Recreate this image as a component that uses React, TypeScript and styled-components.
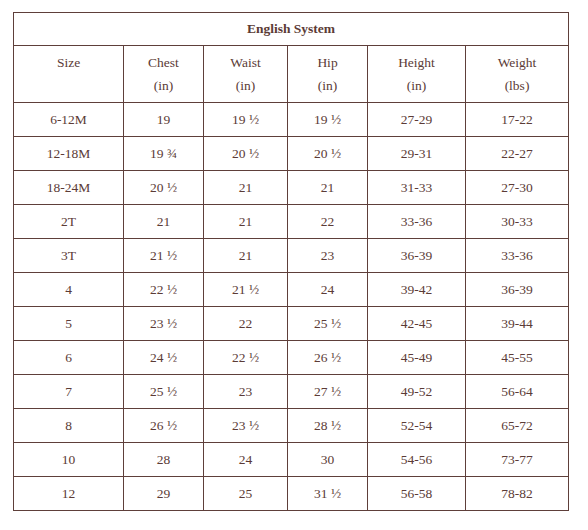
import styled, { createGlobalStyle } from "styled-components";

const GlobalStyle = createGlobalStyle`
	body {
		margin: 0;
		background: #fff;
		font-family: "Liberation Serif", "DejaVu Serif", serif;
		color: #5b3b36;
	}
`;

const Page = styled.div`
	padding: 12px 20px 20px 13px;
`;

const SizeTable = styled.table`
	width: 555px;
	border-collapse: collapse;
	table-layout: fixed;
	font-size: 13.5px;
	color: #5b3b36;

	td, th {
		border: 1px solid #5e3f3a;
		text-align: center;
		padding: 0;
	}
`;

const TitleCell = styled.th`
	height: 32px;
	font-weight: bold;
	font-size: 13.5px;
`;

const HeadCell = styled.td`
	height: 51px;
	vertical-align: top;
	padding-top: 5px !important;
	line-height: 23px;
`;

const Cell = styled.td`
	height: 33px;
	vertical-align: middle;
`;

const columns = [
	{ label: "Size", unit: "", width: 110 },
	{ label: "Chest", unit: "(in)", width: 80 },
	{ label: "Waist", unit: "(in)", width: 84 },
	{ label: "Hip", unit: "(in)", width: 80 },
	{ label: "Height", unit: "(in)", width: 98 },
	{ label: "Weight", unit: "(lbs)", width: 103 },
];

const rows = [
	["6-12M", "19", "19 ½", "19 ½", "27-29", "17-22"],
	["12-18M", "19 ¾", "20 ½", "20 ½", "29-31", "22-27"],
	["18-24M", "20 ½", "21", "21", "31-33", "27-30"],
	["2T", "21", "21", "22", "33-36", "30-33"],
	["3T", "21 ½", "21", "23", "36-39", "33-36"],
	["4", "22 ½", "21 ½", "24", "39-42", "36-39"],
	["5", "23 ½", "22", "25 ½", "42-45", "39-44"],
	["6", "24 ½", "22 ½", "26 ½", "45-49", "45-55"],
	["7", "25 ½", "23", "27 ½", "49-52", "56-64"],
	["8", "26 ½", "23 ½", "28 ½", "52-54", "65-72"],
	["10", "28", "24", "30", "54-56", "73-77"],
	["12", "29", "25", "31 ½", "56-58", "78-82"],
];

export default function App() {
	return (
		<Page>
			<GlobalStyle />
			<SizeTable>
				<colgroup>
					{columns.map(col => <col key={col.label} style={{ width: col.width }} />)}
				</colgroup>
				<tbody>
					<tr>
						<TitleCell colSpan={6}>English System</TitleCell>
					</tr>
					<tr>
						{columns.map(col => (
							<HeadCell key={col.label}>
								{col.label}
								{col.unit && <><br />{col.unit}</>}
							</HeadCell>
						))}
					</tr>
					{rows.map(row => (
						<tr key={row[0]}>
							{row.map((value, i) => <Cell key={i}>{value}</Cell>)}
						</tr>
					))}
				</tbody>
			</SizeTable>
		</Page>
	);
}
